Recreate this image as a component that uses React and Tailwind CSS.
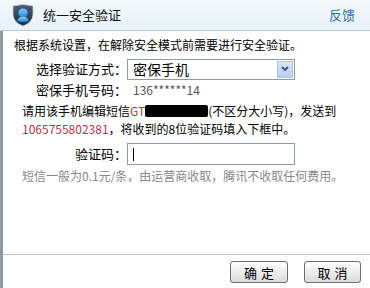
import React from "react";

const font = { fontFamily: '"Noto Sans CJK SC", "Liberation Sans", sans-serif' };

function Shield() {
  return (
    <svg width="24" height="24" viewBox="0 0 24 24">
      <defs>
        <linearGradient id="sg" x1="0" y1="0" x2="0" y2="1">
          <stop offset="0" stopColor="#4a5f78" />
          <stop offset="1" stopColor="#1e2c3d" />
        </linearGradient>
        <linearGradient id="pg" x1="0" y1="0" x2="0" y2="1">
          <stop offset="0" stopColor="#7fd0ff" />
          <stop offset="1" stopColor="#1b87d8" />
        </linearGradient>
      </defs>
      <path d="M2 3 Q12 0 22 3 L22 12 Q21 20 12 23 Q3 20 2 12 Z" fill="url(#sg)" stroke="#c7d0da" strokeWidth="0.8" />
      <circle cx="12" cy="10" r="4.6" fill="url(#pg)" />
      <path d="M6.5 18 Q7 13.8 12 13.8 Q17 13.8 17.5 18 Q12 20 6.5 18 Z" fill="url(#pg)" />
    </svg>
  );
}

export default function App() {
  return (
    <div className="w-[370px] h-[288px] bg-white flex flex-col text-black" style={font}>
      <div className="h-[31px] flex items-center px-[11px] border-b border-[#b7c9d7] bg-gradient-to-b from-[#f3f9fd] to-[#e6f1f8]">
        <Shield />
        <span className="ml-[8px] text-[13px] text-[#111]">统一安全验证</span>
        <span className="ml-auto mr-[4px] text-[13px] text-[#2d6ea8]">反馈</span>
      </div>
      <div className="flex-1 flex flex-col border-l-[3px] border-[#8d9aa5]">
        <div className="flex-1 flex flex-col pl-[11px] text-[12px]">
          <div className="mt-[5px] h-[18px] leading-[18px]">根据系统设置，在解除安全模式前需要进行安全验证。</div>
          <div className="mt-[4px] flex items-center h-[22px]">
            <span className="w-[113px] text-right text-[13px]">选择验证方式：</span>
            <div className="ml-[0px] w-[168px] h-[21px] border border-[#8e9aa6] flex items-center justify-between pl-[5px] pr-[1px]">
              <span className="text-[14px] leading-[18px]">密保手机</span>
              <span className="w-[16px] h-[17px] bg-gradient-to-b from-[#dbe6f6] to-[#b9cdee] border border-[#b0c4e4] flex items-center justify-center">
                <svg width="8" height="6" viewBox="0 0 8 6"><path d="M1 1 L4 4 L7 1" stroke="#3a4f80" strokeWidth="1.8" fill="none" /></svg>
              </span>
            </div>
          </div>
          <div className="flex items-center h-[18px] mt-[1px]">
            <span className="w-[113px] text-right text-[13px]">密保手机号码：</span>
            <span className="ml-[6px] text-[#555] text-[12px]">136******14</span>
          </div>
          <div className="pl-[8px] mt-[3px] h-[18px] leading-[18px] flex items-center">
            <span>请用该手机编辑短信</span>
            <span className="text-[#c0392b]">GT</span>
            <span className="inline-block w-[63px] h-[12px] bg-black rounded-[2px]"></span>
            <span>(不区分大小写)，发送到</span>
          </div>
          <div className="pl-[8px] h-[18px] leading-[18px]">
            <span className="text-[#b8324a]">1065755802381</span>
            <span>，将收到的8位验证码填入下框中。</span>
          </div>
          <div className="mt-[5px] flex items-center h-[22px]">
            <span className="w-[113px] text-right text-[13px]">验证码：</span>
            <div className="w-[168px] h-[22px] border border-[#8e9aa6] flex items-center pl-[5px]">
              <span className="w-px h-[13px] bg-black"></span>
            </div>
          </div>
          <div className="pl-[8px] mt-[2px] h-[18px] leading-[18px] text-[#888]">短信一般为0.1元/条，由运营商收取，腾讯不收取任何费用。</div>
        </div>
        <div className="h-[34px] border-t border-[#b7c4cf] flex items-start justify-end pr-[9px] pt-[6px] gap-[16px]">
          <button className="w-[58px] h-[22px] border border-[#6e6e6e] rounded-[3px] bg-gradient-to-b from-[#ffffff] to-[#dcdcdc] text-[13px] leading-none tracking-[4px] pl-[4px]">确定</button>
          <button className="w-[57px] h-[22px] border border-[#6e6e6e] rounded-[3px] bg-gradient-to-b from-[#ffffff] to-[#dcdcdc] text-[13px] leading-none tracking-[4px] pl-[4px]">取消</button>
        </div>
      </div>
    </div>
  );
}
